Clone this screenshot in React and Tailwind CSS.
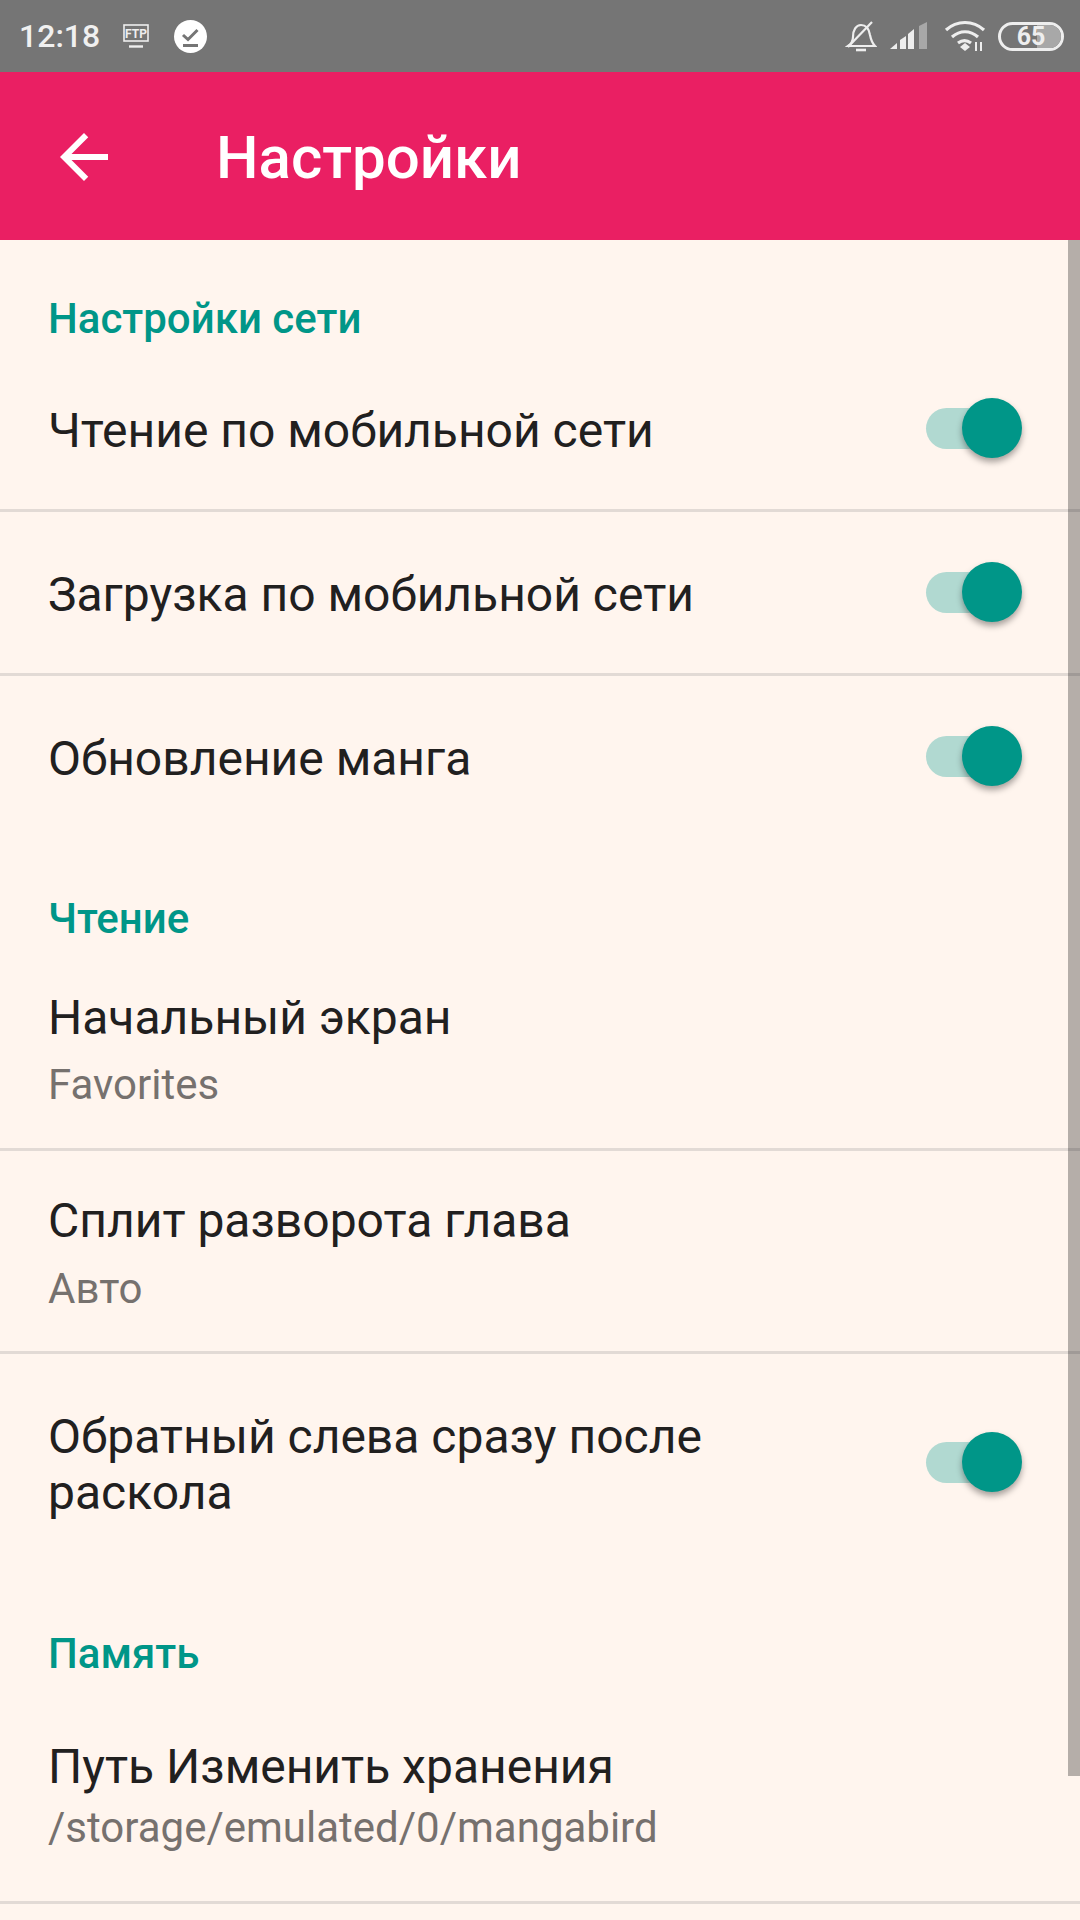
function Toggle({ className }) {
  return (
    <div className={`relative w-[96px] h-[60px] shrink-0 ${className}`}>
      <div className="absolute left-0 top-[10px] w-[70px] h-[41px] rounded-full bg-[#b1d9d1]" />
      <div className="absolute right-0 top-0 w-[60px] h-[60px] rounded-full bg-[#009688] shadow-[0_4px_6px_rgba(0,0,0,0.35)]" />
    </div>
  )
}

function SectionTitle({ children, className }) {
  return <div className={`pl-[48px] text-[42px] leading-[50px] font-medium text-[#009688] ${className}`}>{children}</div>
}

function Divider() {
  return <div className="h-[3px] bg-[#e2dad5]" />
}

function SwitchRow({ title, className, textClass, toggleClass }) {
  return (
    <div className={`flex items-start justify-between pl-[48px] pr-[58px] ${className}`}>
      <div className={`text-[48px] leading-[56px] text-[#21201f] ${textClass}`}>{title}</div>
      <Toggle className={toggleClass} />
    </div>
  )
}

function ValueRow({ title, value, className, valueClass }) {
  return (
    <div className={`pl-[48px] ${className}`}>
      <div className="text-[48px] leading-[56px] text-[#21201f]">{title}</div>
      <div className={`text-[42px] leading-[50px] text-[#76716e] ${valueClass}`}>{value}</div>
    </div>
  )
}

function StatusBar() {
  return (
    <div className="h-[72px] bg-[#757575] flex items-center justify-between pl-[19px] pr-[16px]">
      <div className="flex items-center">
        <span className="text-[32px] leading-none font-medium text-[#f0f0f0]">12:18</span>
        <svg className="ml-[22px]" width="28" height="26" viewBox="0 0 28 26" fill="none" stroke="#eee" strokeWidth="1.6">
          <rect x="2" y="2" width="24" height="16" />
          <path d="M7 23.5h14" strokeWidth="2.4" />
          <text x="14" y="14.5" textAnchor="middle" fontSize="12" fontWeight="700" fill="#eee" stroke="none" fontFamily="Roboto, sans-serif">FTP</text>
        </svg>
        <svg className="ml-[24px]" width="33" height="33" viewBox="0 0 33 33">
          <circle cx="16.5" cy="16.5" r="16.5" fill="#fff" />
          <path d="M9 15l5 4.5 9.500-9.500" fill="none" stroke="#757575" strokeWidth="3" />
          <path d="M9 25.500h15" stroke="#757575" strokeWidth="3" />
        </svg>
      </div>
      <div className="flex items-center">
        <svg width="32" height="32" viewBox="0 0 32 32" fill="none" stroke="#eee" strokeWidth="2.2">
          <path d="M3 26c3-2 5-4 5-9 0-7 3-12 8-12 5 0 8 4 9 10 1 5 2 8 5 11z" />
          <path d="M11 30h10" strokeWidth="2.6" />
          <path d="M3 27L27 2" />
        </svg>
        <svg className="ml-[12px]" width="41" height="30" viewBox="0 0 41 30">
          <path d="M1 28l7-6v6z" fill="#eee" />
          <path d="M11 19l6-4v13h-6z" fill="#eee" />
          <path d="M19 13l6-5v20h-6z" fill="#eee" />
          <path d="M30 5l8-4v27h-8z" fill="#a8a8a8" />
        </svg>
        <svg className="ml-[14px]" width="42" height="32" viewBox="0 0 42 32" fill="none" stroke="#eee" strokeWidth="3.2">
          <path d="M2 10c11-10 27-10 38 0" />
          <path d="M8 17c8-7 18-7 26 0" />
          <path d="M14 23c4-3 9-3 13 0" />
          <path d="M16 27l5-4 5 4-5 4z" fill="#eee" stroke="none" />
          <path d="M32 22v9M37 22v9" strokeWidth="2" />
        </svg>
        <div className="ml-[12px] relative w-[66px] h-[29px] rounded-full border-[3px] border-[#eee] flex items-center justify-center overflow-hidden">
          <div className="absolute right-0 top-0 bottom-0 w-[24px] bg-[#a8a8a8]" />
          <span className="relative text-[25px] leading-none font-bold text-[#eee]">65</span>
        </div>
      </div>
    </div>
  )
}

export default function App() {
  return (
    <div className="relative w-[1080px] h-[1920px] overflow-hidden bg-[#fff5ee] font-['Roboto',sans-serif]">
      <StatusBar />
      <div className="h-[168px] bg-[#ea1f63] flex items-center pl-[48px] pt-[2px]">
        <svg width="72" height="72" viewBox="0 0 24 24" fill="#fff">
          <path d="M20 11H7.830l5.590-5.590L12 4l-8 8 8 8 1.410-1.410L7.830 13H20v-2z" />
        </svg>
        <span className="ml-[96px] mt-[2px] text-[60px] font-medium text-white">Настройки</span>
      </div>

      <SectionTitle className="pt-[54px]">Настройки сети</SectionTitle>
      <SwitchRow title="Чтение по мобильной сети" className="h-[165px]" textClass="pt-[59px]" toggleClass="mt-[54px]" />
      <Divider />
      <SwitchRow title="Загрузка по мобильной сети" className="h-[161px]" textClass="pt-[55px]" toggleClass="mt-[50px]" />
      <Divider />
      <SwitchRow title="Обновление манга" className="h-[161px]" textClass="pt-[55px]" toggleClass="mt-[50px]" />

      <SectionTitle className="pt-[57px]">Чтение</SectionTitle>
      <ValueRow title="Начальный экран" value="Favorites" className="pt-[46px] h-[204px]" valueClass="mt-[14px]" />
      <Divider />
      <ValueRow title="Сплит разворота глава" value="Авто" className="pt-[42px] h-[200px]" valueClass="mt-[15px]" />
      <Divider />
      <SwitchRow title={<>Обратный слева сразу после<br />раскола</>} className="h-[214px]" textClass="pt-[55px]" toggleClass="mt-[78px]" />

      <SectionTitle className="pt-[61px]">Память</SectionTitle>
      <ValueRow title="Путь Изменить хранения" value="/storage/emulated/0/mangabird" className="pt-[60px] h-[222px]" valueClass="mt-[8px]" />
      <Divider />

      <div className="absolute right-0 top-[240px] w-[12px] h-[1536px] bg-[#0000004a]" />
    </div>
  )
}
